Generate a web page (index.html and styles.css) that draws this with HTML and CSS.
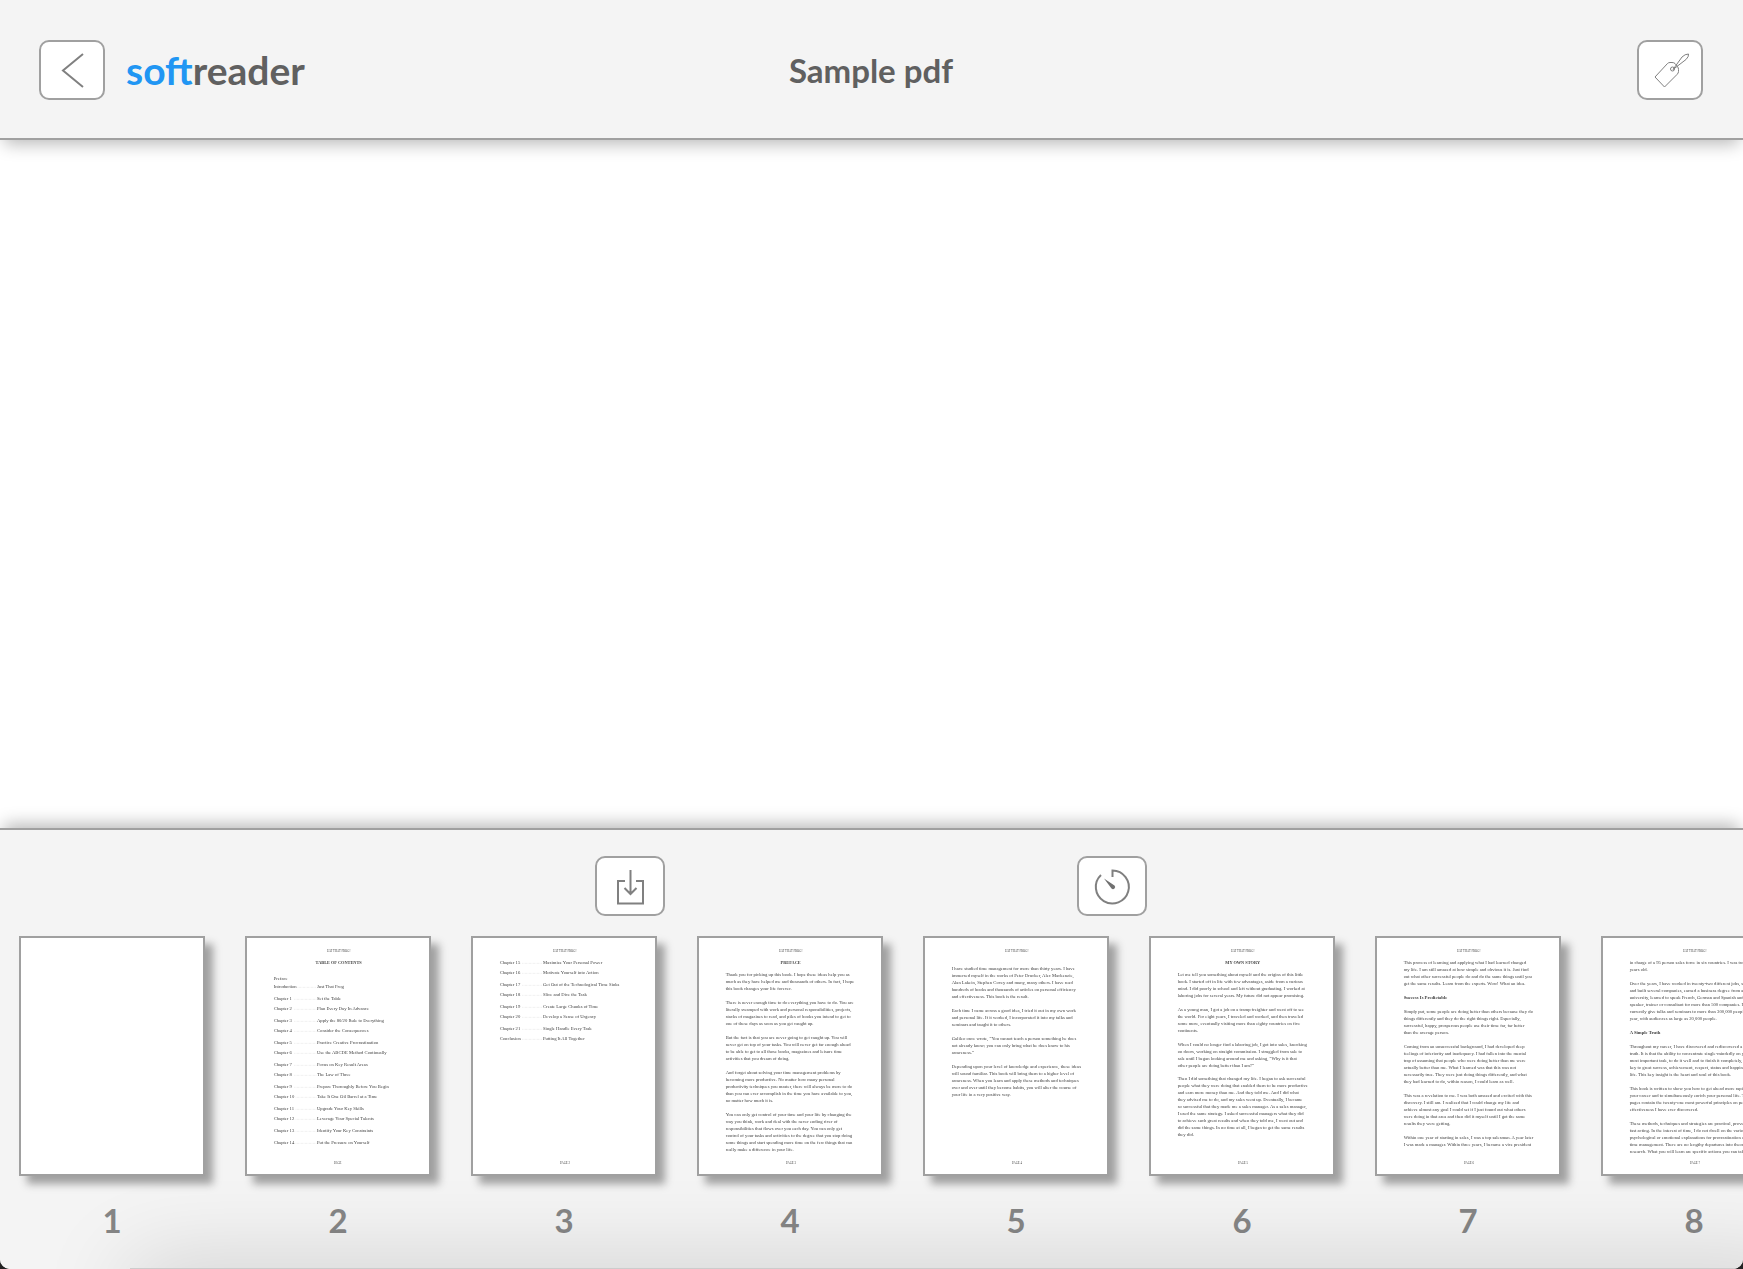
FILE: index.html
```html
<!DOCTYPE html>
<html lang="en">
<head>
<meta charset="utf-8">
<meta name="viewport" content="width=device-width, initial-scale=1">
<title>Sample pdf - softreader</title>
<link rel="stylesheet" href="styles.css">
</head>
<body>
<div class="app">
<header class="topbar">
  <div class="topbar-left">
    <button class="icon-button" type="button" aria-label="Back">
      <svg width="36" height="36" viewBox="0 0 36 36"><path d="M29 2 9 18.500 29 35"/></svg>
    </button>
    <a class="brand" href="#"><span class="brand-accent">soft</span>reader</a>
  </div>
  <h1 class="title">Sample pdf</h1>
  <div class="topbar-right">
    <button class="icon-button" type="button" aria-label="Tag">
      <svg class="fine" width="36" height="36" viewBox="0 0 36 36"><path d="M3 25 15.500 11.500Q16.500 10.500 18 10.500H20Q22 10.500 23 11.500L25.500 14.500Q26.500 16 26.500 17.500V19.500Q26.500 21 25 22.500L12.500 35ZM21 17.500 30 5Q33 2 36.500 2 37 4.500 34 7.500L21 17.500"/><circle cx="20.500" cy="17" r="2"/></svg>
    </button>
  </div>
</header>
<main class="reader"></main>
<footer class="dock">
  <div class="tools">
    <button class="icon-button wide" type="button" aria-label="Download">
      <svg width="36" height="36" viewBox="0 0 36 36"><path d="M13 13H6V35.500H31V13H24M18.500 2V26M12.500 20 18.500 26 24.500 20"/></svg>
    </button>
    <button class="icon-button wide" type="button" aria-label="Timer">
      <svg width="36" height="36" viewBox="0 0 36 36"><path d="M18.500 9V2.500A16.500 16.500 0 1 1 7 7"/><path class="solid" d="M10 10.500 20.500 17.500A2 2 0 0 1 17.500 20.500Z"/></svg>
    </button>
  </div>
  <ol class="pages">
    <li class="page"><a class="thumb" href="#page-1" aria-label="Page 1"></a><span class="number">1</span></li>
    <li class="page"><a class="thumb" href="#page-2" aria-label="Page 2"><svg viewBox="0 0 546 708">
      <text class="head" x="275" y="41">EAT THAT FROG!</text><text class="chapter" x="275" y="78">TABLE OF CONTENTS</text>
      <text><tspan x="80" y="126">Preface</tspan><tspan x="80" y="150">Introduction</tspan><tspan x="80" y="186">Chapter 1</tspan><tspan x="80" y="216">Chapter 2</tspan><tspan x="80" y="252">Chapter 3</tspan><tspan x="80" y="282">Chapter 4</tspan><tspan x="80" y="318">Chapter 5</tspan><tspan x="80" y="348">Chapter 6</tspan><tspan x="80" y="384">Chapter 7</tspan><tspan x="80" y="414">Chapter 8</tspan><tspan x="80" y="450">Chapter 9</tspan><tspan x="80" y="480">Chapter 10</tspan><tspan x="80" y="516">Chapter 11</tspan><tspan x="80" y="546">Chapter 12</tspan><tspan x="80" y="582">Chapter 13</tspan><tspan x="80" y="618">Chapter 14</tspan></text>
      <path class="leader" d="M152 148h56M142 184h66M142 214h66M142 250h66M142 280h66M142 316h66M142 346h66M142 382h66M142 412h66M142 448h66M146 478h62M146 514h62M146 544h62M146 580h62M146 616h62"/>
      <text><tspan x="210" y="150">Just That Frog</tspan><tspan x="210" y="186">Set the Table</tspan><tspan x="210" y="216">Plan Every Day In Advance</tspan><tspan x="210" y="252">Apply the 80/20 Rule to Everything</tspan><tspan x="210" y="282">Consider the Consequences</tspan><tspan x="210" y="318">Practice Creative Procrastination</tspan><tspan x="210" y="348">Use the ABCDE Method Continually</tspan><tspan x="210" y="384">Focus on Key Result Areas</tspan><tspan x="210" y="414">The Law of Three</tspan><tspan x="210" y="450">Prepare Thoroughly Before You Begin</tspan><tspan x="210" y="480">Take It One Oil Barrel at a Time</tspan><tspan x="210" y="516">Upgrade Your Key Skills</tspan><tspan x="210" y="546">Leverage Your Special Talents</tspan><tspan x="210" y="582">Identify Your Key Constraints</tspan><tspan x="210" y="618">Put the Pressure on Yourself</tspan></text>
      <text class="head" x="272" y="677">PAGE</text>
    </svg></a><span class="number">2</span></li>
    <li class="page"><a class="thumb" href="#page-3" aria-label="Page 3"><svg viewBox="0 0 546 708">
      <text class="head" x="275" y="41">EAT THAT FROG!</text>
      <text><tspan x="80" y="78">Chapter 15</tspan><tspan x="80" y="108">Chapter 16</tspan><tspan x="80" y="144">Chapter 17</tspan><tspan x="80" y="174">Chapter 18</tspan><tspan x="80" y="210">Chapter 19</tspan><tspan x="80" y="240">Chapter 20</tspan><tspan x="80" y="276">Chapter 21</tspan><tspan x="80" y="306">Conclusion</tspan></text>
      <path class="leader" d="M148 76h60M148 106h60M148 142h60M148 172h60M148 208h60M148 238h60M148 274h60M148 304h60"/>
      <text><tspan x="210" y="78">Maximize Your Personal Power</tspan><tspan x="210" y="108">Motivate Yourself into Action</tspan><tspan x="210" y="144">Get Out of the Technological Time Sinks</tspan><tspan x="210" y="174">Slice and Dice the Task</tspan><tspan x="210" y="210">Create Large Chunks of Time</tspan><tspan x="210" y="240">Develop a Sense of Urgency</tspan><tspan x="210" y="276">Single Handle Every Task</tspan><tspan x="210" y="306">Putting It All Together</tspan></text>
      <text class="head" x="276" y="677">PAGE 2</text>
    </svg></a><span class="number">3</span></li>
    <li class="page"><a class="thumb" href="#page-4" aria-label="Page 4"><svg viewBox="0 0 546 708">
      <text class="head" x="275" y="41">EAT THAT FROG!</text><text class="chapter" x="275" y="78">PREFACE</text>
      <text y="93"><tspan x="80" dy="21">Thank you for picking up this book. I hope these ideas help you as</tspan><tspan x="80" dy="21">much as they have helped me and thousands of others. In fact, I hope</tspan><tspan x="80" dy="21">this book changes your life forever.</tspan>
      <tspan x="80" dy="42">There is never enough time to do everything you have to do. You are</tspan><tspan x="80" dy="21">literally swamped with work and personal responsibilities, projects,</tspan><tspan x="80" dy="21">stacks of magazines to read, and piles of books you intend to get to</tspan><tspan x="80" dy="21">one of these days as soon as you get caught up.</tspan>
      <tspan x="80" dy="42">But the fact is that you are never going to get caught up. You will</tspan><tspan x="80" dy="21">never get on top of your tasks. You will never get far enough ahead</tspan><tspan x="80" dy="21">to be able to get to all those books, magazines and leisure time</tspan><tspan x="80" dy="21">activities that you dream of doing.</tspan>
      <tspan x="80" dy="42">And forget about solving your time management problems by</tspan><tspan x="80" dy="21">becoming more productive. No matter how many personal</tspan><tspan x="80" dy="21">productivity techniques you master, there will always be more to do</tspan><tspan x="80" dy="21">than you can ever accomplish in the time you have available to you,</tspan><tspan x="80" dy="21">no matter how much it is.</tspan>
      <tspan x="80" dy="42">You can only get control of your time and your life by changing the</tspan><tspan x="80" dy="21">way you think, work and deal with the never ending river of</tspan><tspan x="80" dy="21">responsibilities that flows over you each day. You can only get</tspan><tspan x="80" dy="21">control of your tasks and activities to the degree that you stop doing</tspan><tspan x="80" dy="21">some things and start spending more time on the few things that can</tspan><tspan x="80" dy="21">really make a difference in your life.</tspan></text>
      <text class="head" x="276" y="677">PAGE 3</text>
    </svg></a><span class="number">4</span></li>
    <li class="page"><a class="thumb" href="#page-5" aria-label="Page 5"><svg viewBox="0 0 546 708">
      <text class="head" x="275" y="41">EAT THAT FROG!</text>
      <text y="75"><tspan x="80" dy="21">I have studied time management for more than thirty years. I have</tspan><tspan x="80" dy="21">immersed myself in the works of Peter Drucker, Alec Mackenzie,</tspan><tspan x="80" dy="21">Alan Lakein, Stephen Covey and many, many others. I have read</tspan><tspan x="80" dy="21">hundreds of books and thousands of articles on personal efficiency</tspan><tspan x="80" dy="21">and effectiveness. This book is the result.</tspan>
      <tspan x="80" dy="42">Each time I came across a good idea, I tried it out in my own work</tspan><tspan x="80" dy="21">and personal life. If it worked, I incorporated it into my talks and</tspan><tspan x="80" dy="21">seminars and taught it to others.</tspan>
      <tspan x="80" dy="42">Galileo once wrote, “You cannot teach a person something he does</tspan><tspan x="80" dy="21">not already know; you can only bring what he does know to his</tspan><tspan x="80" dy="21">awareness.”</tspan>
      <tspan x="80" dy="42">Depending upon your level of knowledge and experience, these ideas</tspan><tspan x="80" dy="21">will sound familiar. This book will bring them to a higher level of</tspan><tspan x="80" dy="21">awareness. When you learn and apply these methods and techniques</tspan><tspan x="80" dy="21">over and over until they become habits, you will alter the course of</tspan><tspan x="80" dy="21">your life in a very positive way.</tspan></text>
      <text class="head" x="276" y="677">PAGE 4</text>
    </svg></a><span class="number">5</span></li>
    <li class="page"><a class="thumb" href="#page-6" aria-label="Page 6"><svg viewBox="0 0 546 708">
      <text class="head" x="275" y="41">EAT THAT FROG!</text><text class="chapter" x="275" y="78">MY OWN STORY</text>
      <text y="93"><tspan x="80" dy="21">Let me tell you something about myself and the origins of this little</tspan><tspan x="80" dy="21">book. I started off in life with few advantages, aside from a curious</tspan><tspan x="80" dy="21">mind. I did poorly in school and left without graduating. I worked at</tspan><tspan x="80" dy="21">laboring jobs for several years. My future did not appear promising.</tspan>
      <tspan x="80" dy="42">As a young man, I got a job on a tramp freighter and went off to see</tspan><tspan x="80" dy="21">the world. For eight years, I traveled and worked, and then traveled</tspan><tspan x="80" dy="21">some more, eventually visiting more than eighty countries on five</tspan><tspan x="80" dy="21">continents.</tspan>
      <tspan x="80" dy="42">When I could no longer find a laboring job, I got into sales, knocking</tspan><tspan x="80" dy="21">on doors, working on straight commission. I struggled from sale to</tspan><tspan x="80" dy="21">sale until I began looking around me and asking, “Why is it that</tspan><tspan x="80" dy="21">other people are doing better than I am?”</tspan>
      <tspan x="80" dy="38">Then I did something that changed my life. I began to ask successful</tspan><tspan x="80" dy="21">people what they were doing that enabled them to be more productive</tspan><tspan x="80" dy="21">and earn more money than me. And they told me. And I did what</tspan><tspan x="80" dy="21">they advised me to do, and my sales went up. Eventually, I became</tspan><tspan x="80" dy="21">so successful that they made me a sales manager. As a sales manager,</tspan><tspan x="80" dy="21">I used the same strategy. I asked successful managers what they did</tspan><tspan x="80" dy="21">to achieve such great results and when they told me, I went out and</tspan><tspan x="80" dy="21">did the same things. In no time at all, I began to get the same results</tspan><tspan x="80" dy="21">they did.</tspan></text>
      <text class="head" x="276" y="677">PAGE 5</text>
    </svg></a><span class="number">6</span></li>
    <li class="page"><a class="thumb" href="#page-7" aria-label="Page 7"><svg viewBox="0 0 546 708">
      <text class="head" x="275" y="41">EAT THAT FROG!</text>
      <text y="56"><tspan x="80" dy="21">This process of learning and applying what I had learned changed</tspan><tspan x="80" dy="21">my life. I am still amazed at how simple and obvious it is. Just find</tspan><tspan x="80" dy="21">out what other successful people do and do the same things until you</tspan><tspan x="80" dy="21">get the same results. Learn from the experts. Wow! What an idea.</tspan>
      <tspan class="strong" x="80" dy="42">Success Is Predictable</tspan>
      <tspan x="80" dy="42">Simply put, some people are doing better than others because they do</tspan><tspan x="80" dy="21">things differently and they do the right things right. Especially,</tspan><tspan x="80" dy="21">successful, happy, prosperous people use their time far, far better</tspan><tspan x="80" dy="21">than the average person.</tspan>
      <tspan x="80" dy="42">Coming from an unsuccessful background, I had developed deep</tspan><tspan x="80" dy="21">feelings of inferiority and inadequacy. I had fallen into the mental</tspan><tspan x="80" dy="21">trap of assuming that people who were doing better than me were</tspan><tspan x="80" dy="21">actually better than me. What I learned was that this was not</tspan><tspan x="80" dy="21">necessarily true. They were just doing things differently, and what</tspan><tspan x="80" dy="21">they had learned to do, within reason, I could learn as well.</tspan>
      <tspan x="80" dy="42">This was a revelation to me. I was both amazed and excited with this</tspan><tspan x="80" dy="21">discovery. I still am. I realized that I could change my life and</tspan><tspan x="80" dy="21">achieve almost any goal I could set if I just found out what others</tspan><tspan x="80" dy="21">were doing in that area and then did it myself until I got the same</tspan><tspan x="80" dy="21">results they were getting.</tspan>
      <tspan x="80" dy="42">Within one year of starting in sales, I was a top salesman. A year later</tspan><tspan x="80" dy="21">I was made a manager. Within three years, I became a vice president</tspan></text>
      <text class="head" x="276" y="677">PAGE 6</text>
    </svg></a><span class="number">7</span></li>
    <li class="page"><a class="thumb" href="#page-8" aria-label="Page 8"><svg viewBox="0 0 546 708">
      <text class="head" x="275" y="41">EAT THAT FROG!</text>
      <text y="56"><tspan x="80" dy="21">in charge of a 95 person sales force in six countries. I was twenty-five</tspan><tspan x="80" dy="21">years old.</tspan>
      <tspan x="80" dy="42">Over the years, I have worked in twenty-two different jobs, started</tspan><tspan x="80" dy="21">and built several companies, earned a business degree from a major</tspan><tspan x="80" dy="21">university, learned to speak French, German and Spanish and been a</tspan><tspan x="80" dy="21">speaker, trainer or consultant for more than 500 companies. I</tspan><tspan x="80" dy="21">currently give talks and seminars to more than 300,000 people each</tspan><tspan x="80" dy="21">year, with audiences as large as 20,000 people.</tspan>
      <tspan class="strong" x="80" dy="42">A Simple Truth</tspan>
      <tspan x="80" dy="42">Throughout my career, I have discovered and rediscovered a simple</tspan><tspan x="80" dy="21">truth. It is that the ability to concentrate single-mindedly on your</tspan><tspan x="80" dy="21">most important task, to do it well and to finish it completely, is the</tspan><tspan x="80" dy="21">key to great success, achievement, respect, status and happiness in</tspan><tspan x="80" dy="21">life. This key insight is the heart and soul of this book.</tspan>
      <tspan x="80" dy="42">This book is written to show you how to get ahead more rapidly in</tspan><tspan x="80" dy="21">your career and to simultaneously enrich your personal life. These</tspan><tspan x="80" dy="21">pages contain the twenty-one most powerful principles on personal</tspan><tspan x="80" dy="21">effectiveness I have ever discovered.</tspan>
      <tspan x="80" dy="42">These methods, techniques and strategies are practical, proven and</tspan><tspan x="80" dy="21">fast acting. In the interest of time, I do not dwell on the various</tspan><tspan x="80" dy="21">psychological or emotional explanations for procrastination or poor</tspan><tspan x="80" dy="21">time management. There are no lengthy departures into theory or</tspan><tspan x="80" dy="21">research. What you will learn are specific actions you can take</tspan></text>
      <text class="head" x="276" y="677">PAGE 7</text>
    </svg></a><span class="number">8</span></li>
  </ol>
</footer>
</div>
</body>
</html>
```
FILE: styles.css
```css
* { box-sizing: border-box; }

body {
  margin: 0;
  background: #222;
  color: #606060;
  font-family: Lato, "Open Sans", sans-serif;
}

.app {
  display: flex;
  flex-direction: column;
  min-height: 100vh;
  background: #fff;
  border-radius: 0 0 10px 10px;
  overflow: hidden;
}

.topbar {
  display: grid;
  grid-template-columns: 1fr auto 1fr;
  align-items: center;
  height: 140px;
  padding: 2px 40px 0 39px;
  background: #f4f4f4;
  border-bottom: 2px solid #a0a0a0;
  box-shadow: 0 8px 16px -4px rgba(0, 0, 0, 0.28);
}

.topbar-left {
  display: flex;
  align-items: center;
  gap: 21px;
}

.topbar-right {
  display: flex;
  justify-content: flex-end;
}

.icon-button {
  display: flex;
  align-items: center;
  justify-content: center;
  width: 66px;
  height: 60px;
  padding: 0;
  background: #fff;
  border: 2px solid #a0a0a0;
  border-radius: 10px;
}

.icon-button.wide { width: 70px; }

.icon-button svg {
  overflow: visible;
  fill: none;
  stroke: #808080;
  stroke-width: 2;
}

.icon-button .fine {
  stroke: #808080;
  stroke-width: 1;
}

.icon-button .solid {
  fill: #707070;
  stroke: none;
}

.brand {
  color: #606060;
  font-size: 39px;
  font-weight: 700;
  line-height: 48px;
  text-decoration: none;
}

.brand-accent { color: #2196f3; }

.title {
  margin: 0;
  font-size: 33px;
  font-weight: 700;
  line-height: 40px;
}

.reader { flex: 1; }

.dock {
  position: relative;
  padding: 26px 0 29px;
  background: #f4f4f4;
  border-top: 2px solid #a0a0a0;
  box-shadow: 0 -8px 16px -4px rgba(0, 0, 0, 0.28);
}

/* soft shade rising from the bottom edge */
.dock::after {
  content: "";
  position: absolute;
  top: calc(100% - 1px);
  left: 130px;
  right: -60px;
  height: 60px;
  background: #ccc;
  box-shadow: 0 0 90px rgba(0, 0, 0, 0.18);
  pointer-events: none;
}

.tools {
  display: flex;
  justify-content: center;
  gap: 412px;
  padding-right: 2px;
}

.pages {
  display: flex;
  gap: 40px;
  margin: 0;
  padding: 20px 0 0 19px;
  list-style: none;
}

.page {
  flex: none;
  width: 186px;
}

.thumb {
  display: block;
  height: 240px;
  background: #fff;
  border: 2px solid #a0a0a0;
  box-shadow: 8px 8px 8px #a0a0a0;
}

.thumb svg {
  display: block;
  width: 100%;
  height: 100%;
  fill: #404040;
  font-family: "Liberation Serif", serif;
  font-size: 14px;
  filter: blur(0.6px);
}

.thumb .head {
  font-size: 9px;
  text-anchor: middle;
}

.thumb .chapter {
  font-size: 13px;
  font-weight: 700;
  text-anchor: middle;
}

.thumb .strong { font-weight: 700; }

.thumb .leader {
  fill: none;
  stroke: #bbb;
  stroke-width: 1;
  stroke-dasharray: 2 2;
}

.number {
  display: block;
  margin-top: 24px;
  color: #868686;
  font-size: 33px;
  font-weight: 700;
  line-height: 40px;
  text-align: center;
}
```
